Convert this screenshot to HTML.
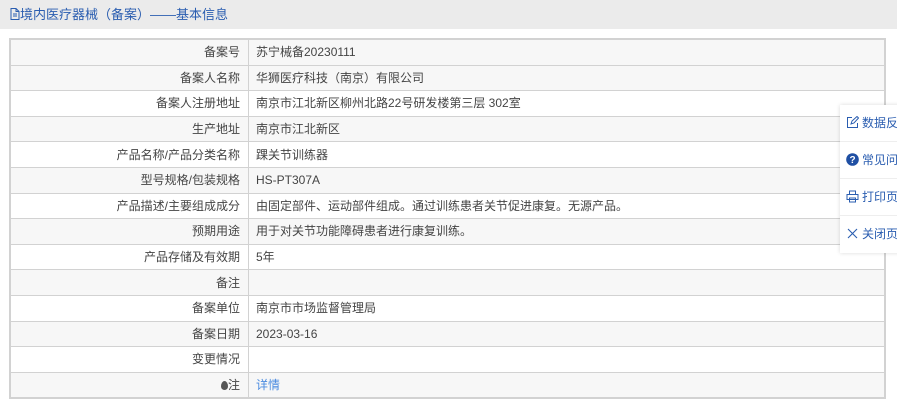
<!DOCTYPE html>
<html><head><meta charset="utf-8"><style>
body{margin:0;width:897px;height:408px;overflow:hidden;background:#fff;font-family:"Liberation Sans","Noto Sans CJK SC",sans-serif;font-size:12px;color:#444;position:relative}
.hd{height:29px;background:#ebebeb;color:#2a5db0;font-size:13px;line-height:29px;padding-left:10px}
table{position:absolute;left:9px;top:38px;width:877px;border-collapse:collapse;border:2px solid #d2d2d2}
td{height:24.6px;border:1px solid #d2d2d2;padding:0;line-height:18px}
td.l{width:229px;text-align:right;padding-right:8px}
td.v{padding-left:7px}
tr.g td{background:#f7f7f7}
.side{position:absolute;left:840px;top:105px;width:60px;height:148px;background:#fff;box-shadow:0 0 4px rgba(0,0,0,.15)}
.side div{height:37px;line-height:37px;border-bottom:1px solid #eee;color:#2a5db0;font-size:12px;padding-left:6px;white-space:nowrap;overflow:hidden;box-sizing:border-box}
.side svg{vertical-align:-2px;margin-right:3px}
</style></head><body>
<div class="hd"><svg width="10" height="12" viewBox="0 0 10 12" style="vertical-align:-1px"><path d="M1 .5h5l3 3v8H1z M6 .5v3h3 M3 6h4M3 8h4" fill="none" stroke="#2a5db0"/></svg>境内医疗器械（备案）——基本信息</div>
<table>
<tr class="g"><td class="l">备案号</td><td class="v">苏宁械备20230111</td></tr>
<tr class="g"><td class="l">备案人名称</td><td class="v">华狮医疗科技（南京）有限公司</td></tr>
<tr><td class="l">备案人注册地址</td><td class="v">南京市江北新区柳州北路22号研发楼第三层 302室</td></tr>
<tr class="g"><td class="l">生产地址</td><td class="v">南京市江北新区</td></tr>
<tr><td class="l">产品名称/产品分类名称</td><td class="v">踝关节训练器</td></tr>
<tr class="g"><td class="l">型号规格/包装规格</td><td class="v">HS-PT307A</td></tr>
<tr><td class="l">产品描述/主要组成成分</td><td class="v">由固定部件、运动部件组成。通过训练患者关节促进康复。无源产品。</td></tr>
<tr class="g"><td class="l">预期用途</td><td class="v">用于对关节功能障碍患者进行康复训练。</td></tr>
<tr><td class="l">产品存储及有效期</td><td class="v">5年</td></tr>
<tr class="g"><td class="l">备注</td><td class="v"></td></tr>
<tr><td class="l">备案单位</td><td class="v">南京市市场监督管理局</td></tr>
<tr class="g"><td class="l">备案日期</td><td class="v">2023-03-16</td></tr>
<tr><td class="l">变更情况</td><td class="v"></td></tr>
<tr class="g"><td class="l"><span style="display:inline-block;width:7px;height:9px;background:#555;border-radius:50% 50% 50% 50%/60% 60% 40% 40%;vertical-align:-1px"></span>注</td><td class="v" style="color:#4a8be0">详情</td></tr>
</table>
<div class="side">
<div><svg width="13" height="13" viewBox="0 0 13 13"><path d="M6 1.5H1.5v10h10V7 M5 8l1-3 5-4.5 1.5 1.5L8 7z" fill="none" stroke="#2a5db0"/></svg>数据反馈</div>
<div><svg width="13" height="13" viewBox="0 0 13 13"><circle cx="6.5" cy="6.5" r="6.3" fill="#1f4fa3"/><text x="6.5" y="10" font-size="10" font-weight="bold" fill="#fff" text-anchor="middle" font-family="Liberation Sans">?</text></svg>常见问题</div>
<div><svg width="13" height="13" viewBox="0 0 13 13"><path d="M3.5 4V1h6v3 M1 4.5h11v5H1z M3.5 8h6v4h-6z" fill="none" stroke="#2a5db0"/></svg>打印页面</div>
<div style="border:0"><svg width="13" height="13" viewBox="0 0 13 13"><path d="M2 2l9 9M11 2l-9 9" stroke="#2a5db0" stroke-width="1.1"/></svg>关闭页面</div>
</div>
</body></html>
